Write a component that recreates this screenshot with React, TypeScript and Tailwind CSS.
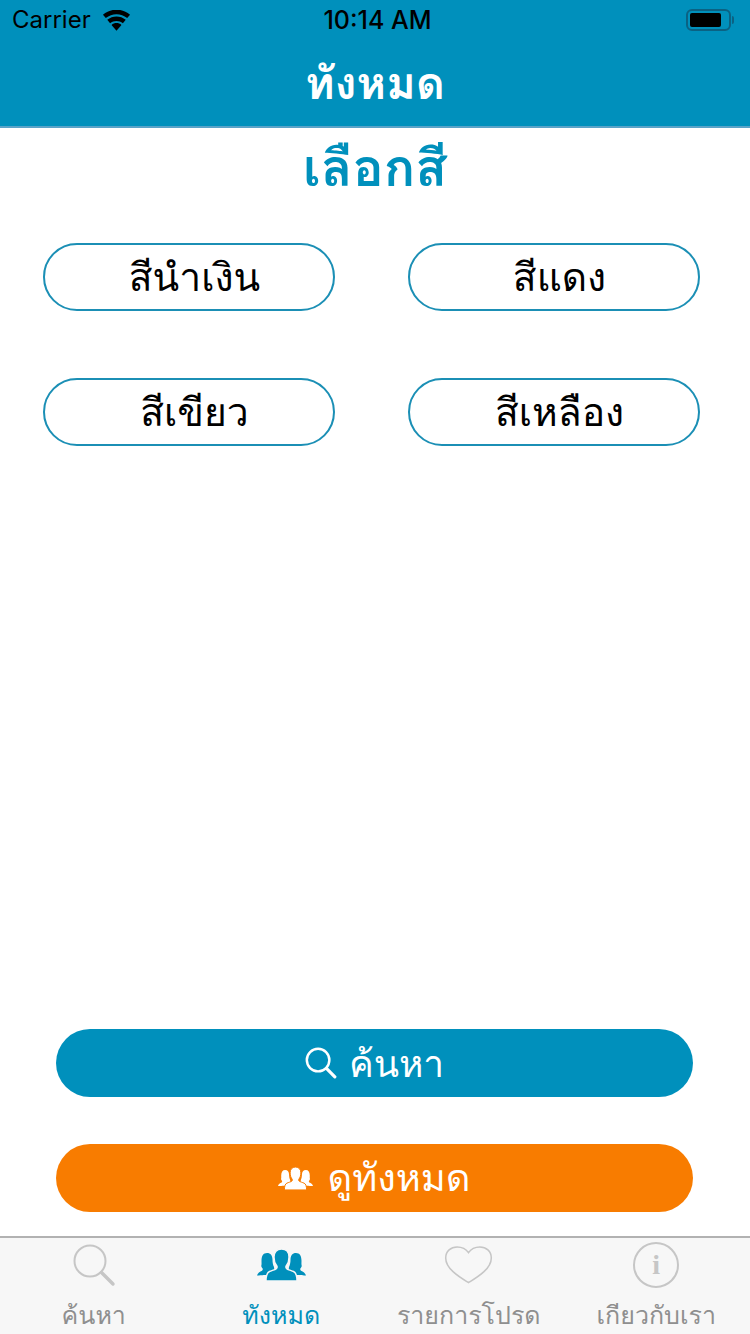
import React from "react";

const Search = ({ className = "", thin = 2, thick = 3.4 }: { className?: string; thin?: number; thick?: number }) => (
  <svg viewBox="0 0 44 44" className={className} fill="none" stroke="currentColor">
    <circle cx="18" cy="18" r="15.5" strokeWidth={thin} />
    <path d="M29.5 29.5 L41 41" strokeWidth={thick} strokeLinecap="round" />
  </svg>
);

const People = ({ className = "", gap }: { className?: string; gap: string }) => (
  <svg viewBox="0 0 49 32" className={className} fill="currentColor">
    <path d="M10 4c3.600 0 5.500 2.700 5.500 6.500 0 2.500.3 5 1.500 7.500l1 8H8c-1 0-6 .5-8 .5 .5-2.500 3-3.800 5-4.800.8-.5 1-1.500.5-2.500-.8-1-1.300-1.600-1.200-2.500.4-1.500.2-3 .2-5C4.500 6.700 6.400 4 10 4z" />
    <path d="M39 4c-3.600 0-5.500 2.700-5.500 6.500 0 2.500-.3 5-1.500 7.500l-1 8h10c1 0 6 .5 8 .5-.5-2.500-3-3.800-5-4.800-.8-.5-1-1.500-.5-2.500.8-1 1.300-1.600 1.200-2.500-.4-1.500-.2-3-.2-5C44.500 6.700 42.600 4 39 4z" />
    <path
      d="M24.500 0c4.800 0 7.500 3.300 7.500 8 0 3.800-1.200 7-2.700 8.800-.7.900-.5 2.300.5 3 1.500 1 4.500 1.700 6.700 2.700 2.400 1.100 3.500 4 3.500 9.500H9c0-5.500 1.100-8.400 3.500-9.500 2.200-1 5.200-1.700 6.700-2.700 1-.7 1.200-2.100.5-3C18.200 15 17 11.800 17 8c0-4.700 2.700-8 7.500-8z"
      stroke={gap}
      strokeWidth="1.400"
    />
  </svg>
);

const Heart = ({ className = "" }: { className?: string }) => (
  <svg viewBox="0 0 50 40" className={className} fill="none" stroke="currentColor" strokeWidth="1.600">
    <path d="M25 38.500C17 33.500 1 24.500 1 12.500 1 5.500 6.500 1 13 1c5.200 0 9.500 2.300 12 6 2.500-3.700 6.800-6 12-6 6.500 0 12 4.500 12 11.500 0 12-16 21-24 26z" />
  </svg>
);

const Wifi = () => (
  <svg viewBox="0 0 30 22" className="h-[21px] w-[29px] text-black" fill="currentColor">
    <path d="M15 21.800 9.800 15.600c2.900-2.500 7.500-2.500 10.400 0z" />
    <path d="M8.300 13.900 5.300 10.300c5.600-4.800 13.800-4.800 19.400 0l-3 3.600c-3.900-3.300-9.500-3.300-13.400 0z" />
    <path d="M3.800 8.500.8 4.900C9-2.100 21-2.100 29.200 4.900l-3 3.600C19.700 3 10.300 3 3.800 8.500z" />
  </svg>
);

const Battery = () => (
  <div className="flex items-center">
    <div className="flex h-[22px] w-[45px] items-center rounded-[6px] border-2 border-[#0b6283] p-[2px]">
      <div className="h-full w-[31px] rounded-[2px] bg-black" />
    </div>
    <div className="ml-[1px] h-[8px] w-[2px] rounded-r-full bg-[#0b6283]" />
  </div>
);

const ColorButton = ({ label }: { label: string }) => (
  <button className="flex h-[68px] w-[292px] items-center justify-center rounded-[34px] border-2 border-[#1b8fb5] bg-white pl-[11px] text-[39px] font-light leading-none text-black">
    {label}
  </button>
);

const Tab = ({
  label,
  active,
  icon,
}: {
  label: string;
  active?: boolean;
  icon: React.ReactNode;
}) => (
  <div className={`flex flex-1 flex-col items-center ${active ? "text-[#0090bc]" : "text-[#8f8f8f]"}`}>
    <div className="flex h-[56px] items-center justify-center">{icon}</div>
    <span className="mt-[4px] whitespace-nowrap text-[25px] font-light leading-[38px]">{label}</span>
  </div>
);

export default function App() {
  return (
    <div
      className="flex h-[1334px] w-[750px] flex-col overflow-hidden bg-white"
      style={{ fontFamily: '"Loma", "Noto Sans Thai Looped", "Noto Sans Thai", "Noto Sans", "DejaVu Sans", sans-serif' }}
    >
      <header className="flex h-[128px] shrink-0 flex-col border-b-2 border-[#5aa3c8] bg-[#0090bc]">
        <div className="grid h-[40px] grid-cols-[1fr_auto_1fr] items-center pl-[12px] pr-[16px] text-black" style={{ fontFamily: 'Inter, sans-serif' }}>
          <div className="flex items-center gap-[11px]">
            <span className="text-[24px] leading-none">Carrier</span>
            <Wifi />
          </div>
          <span className="ml-[9px] text-[25px] font-medium leading-none">10:14 AM</span>
          <div className="flex justify-end">
            <Battery />
          </div>
        </div>
        <h1 className="flex flex-1 items-center justify-center text-[45px] font-bold leading-none text-white">ทังหมด</h1>
      </header>

      <main className="flex flex-1 flex-col">
        <h2 className="mt-[13px] text-center text-[52px] font-bold leading-[54px] text-[#0090bc]">เลือกสี</h2>
        <div className="mt-[48px] grid grid-cols-[292px_292px] justify-between gap-y-[67px] pl-[43px] pr-[50px]">
          <ColorButton label="สีนำเงิน" />
          <ColorButton label="สีแดง" />
          <ColorButton label="สีเขียว" />
          <ColorButton label="สีเหลือง" />
        </div>
        <div className="mt-auto flex flex-col gap-[47px] pb-[24px] pl-[56px] pr-[57px]">
          <button className="flex h-[68px] items-center justify-center gap-[12px] rounded-[34px] bg-[#0090bc] text-[37px] font-light leading-none text-white">
            <Search className="h-[32px] w-[32px]" thin={3.4} thick={4.4} />
            <span>ค้นหา</span>
          </button>
          <button className="flex h-[68px] items-center justify-center gap-[14px] rounded-[34px] bg-[#f87c00] text-[38px] font-light leading-none text-white">
            <People className="h-[23px] w-[35px]" gap="#f87c00" />
            <span>ดูทังหมด</span>
          </button>
        </div>
      </main>

      <nav className="flex h-[98px] shrink-0 border-t-2 border-[#b2b2b2] bg-[#f7f7f7]">
        <Tab label="ค้นหา" icon={<Search className="h-[44px] w-[44px] text-[#c6c6c6]" />} />
        <Tab label="ทังหมด" active icon={<People className="h-[32px] w-[49px]" gap="#f7f7f7" />} />
        <Tab label="รายการโปรด" icon={<Heart className="h-[38px] w-[49px] text-[#c6c6c6]" />} />
        <Tab
          label="เกียวกับเรา"
          icon={
            <div className="flex h-[46px] w-[46px] items-center justify-center rounded-full border-2 border-[#c6c6c6] text-[28px] font-bold leading-none text-[#c6c6c6]" style={{ fontFamily: '"Liberation Serif", serif' }}>
              i
            </div>
          }
        />
      </nav>
    </div>
  );
}
